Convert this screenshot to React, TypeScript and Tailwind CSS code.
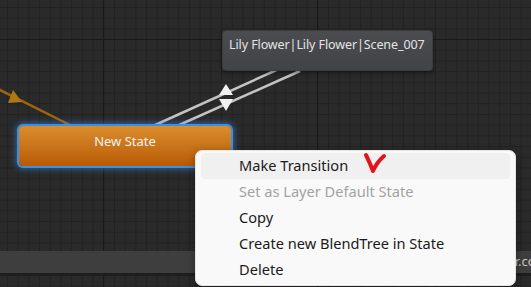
import React from "react";

// Fundo em grade do editor de estados.
function Grid() {
  return (
    <svg className="absolute inset-0" width="531" height="287">
      <defs>
        <pattern id="minor" width="10.7" height="10.7" patternUnits="userSpaceOnUse" patternTransform="translate(7 7)">
          <path d="M0.5 0 V10.7 M0 0.5 H10.7" stroke="#222222" strokeWidth="1" fill="none" />
        </pattern>
        <pattern id="major" width="214" height="214" patternUnits="userSpaceOnUse" patternTransform="translate(103 39)">
          <path d="M0.5 0 V214 M0 0.5 H214" stroke="#191919" strokeWidth="1.2" fill="none" />
        </pattern>
      </defs>
      <rect width="531" height="287" fill="#2a2a2a" />
      <rect width="531" height="287" fill="url(#minor)" />
      <rect width="531" height="287" fill="url(#major)" />
    </svg>
  );
}

// Linhas de transição e setas entre os estados.
function Transitions() {
  return (
    <svg className="absolute inset-0" width="531" height="287">
      <line x1="-2" y1="89" x2="72" y2="126" stroke="#9a6510" strokeWidth="2.5" />
      <polygon points="13,90 8,103 22,102" fill="#b07812" />
      <line x1="153" y1="126" x2="292" y2="63" stroke="#c4c4c4" strokeWidth="2.5" />
      <line x1="177" y1="126" x2="300" y2="71" stroke="#c4c4c4" strokeWidth="2.5" />
      <polygon points="226,84 219,95 233,95" fill="#f2f2f2" />
      <polygon points="219,99 233,99 226,111" fill="#f2f2f2" />
    </svg>
  );
}

const menuItems = [
  { label: "Make Transition", active: true },
  { label: "Set as Layer Default State", disabled: true },
  { label: "Copy" },
  { label: "Create new BlendTree in State" },
  { label: "Delete" },
];

export default function App() {
  return (
    <div className="relative w-[531px] h-[287px] overflow-hidden bg-[#2a2a2a] font-['Noto_Sans',sans-serif]">
      <Grid />
      <Transitions />

      {/* Nó do estado destino */}
      <div className="absolute left-[222px] top-[30px] w-[211px] h-[41px] rounded-[4px] bg-gradient-to-b from-[#4a4c50] to-[#414347] border border-[#3a3c3f] shadow-[0_2px_4px_rgba(0,0,0,0.4)] px-[6px] pt-[5px] text-[12.5px] tracking-[-0.1px] leading-[18px] text-[#e4e4e4] whitespace-nowrap">
        Lily Flower|Lily Flower|Scene_007
      </div>

      {/* Nó "New State" selecionado */}
      <div className="absolute left-[19px] top-[126px] w-[212px] h-[40px] rounded-[4px] bg-gradient-to-b from-[#da8d2c] to-[#b85b02] shadow-[0_0_0_2px_#3d8fe6,0_0_6px_3px_rgba(60,140,230,0.6)] flex justify-center pt-[6px] text-[13px] leading-[18px] text-[#f3f3f3]">
        New State
      </div>

      {/* Barra inferior */}
      <div className="absolute left-0 right-0 top-[251px] h-[22px] bg-[#3e3e3e] border-b-[3px] border-[#1e1e1e] box-content flex items-center pl-[456px] whitespace-nowrap text-[13px] text-[#c8c8c8]">
        Lily Flower.controller
      </div>

      {/* Menu de contexto */}
      <div className="absolute left-[195px] top-[150px] w-[321px] rounded-[7px] bg-[#f9f9f9] border border-[#e4e4e4] shadow-[0_3px_10px_rgba(0,0,0,0.35)] px-[5px] py-[2px] font-['Noto_Sans',sans-serif] text-[14.6px]">
        {menuItems.map((item) => (
          <div
            key={item.label}
            className={`relative h-[26px] flex items-center pl-[38px] rounded-[4px] ${item.active ? "bg-[#f0f0f0]" : ""} ${item.disabled ? "text-[#a3a3a3]" : "text-[#1b1b1b]"}`}
          >
            {item.label}
            {item.active && (
              <svg className="absolute left-[162px] top-[-2px]" width="26" height="26" viewBox="0 0 26 26">
                <path d="M3 4 Q7 12 10 20 Q14 11 21 5" stroke="#e3141b" strokeWidth="4" fill="none" strokeLinecap="round" strokeLinejoin="round" />
              </svg>
            )}
          </div>
        ))}
      </div>
    </div>
  );
}
